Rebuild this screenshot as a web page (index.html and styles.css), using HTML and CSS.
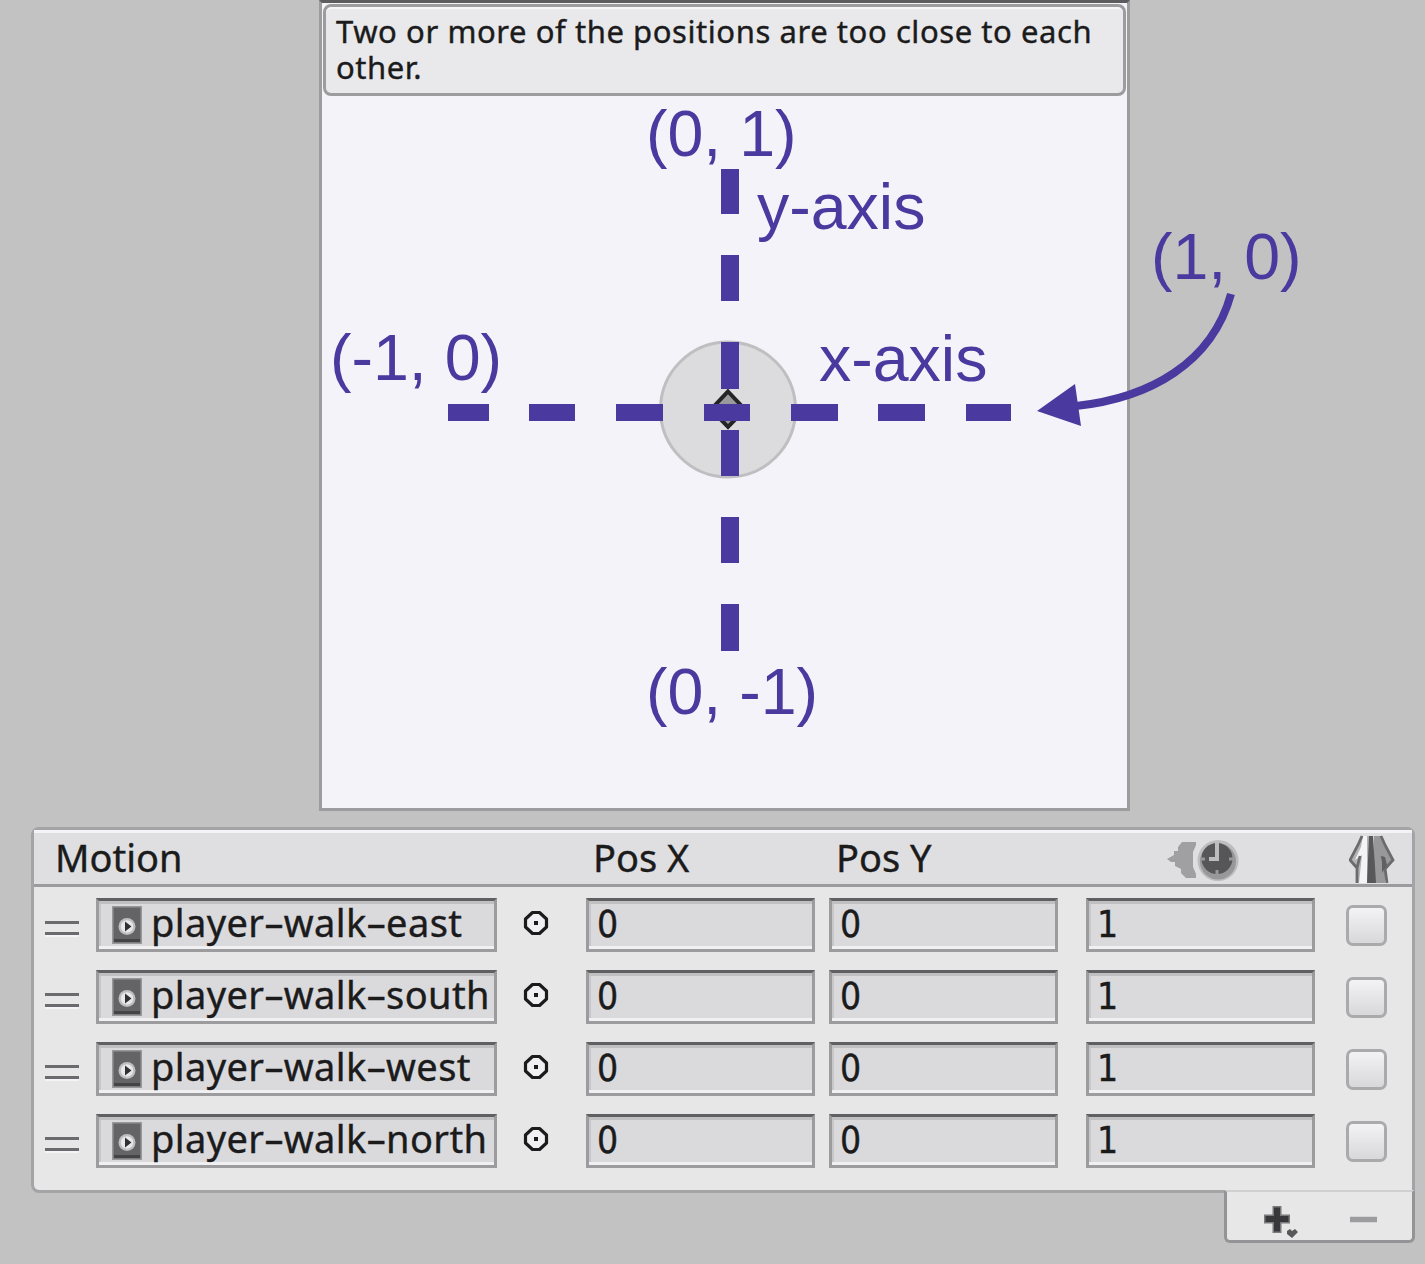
FILE: index.html
```html
<!DOCTYPE html>
<html lang="en">
<head>
<meta charset="utf-8">
<title>Blend Tree</title>
<link rel="stylesheet" href="styles.css">
</head>
<body>
<svg class="defs" width="0" height="0" aria-hidden="true">
  <defs>
    <symbol id="clip" viewBox="0 0 30 38">
      <rect width="30" height="38" fill="#98989c"/>
      <rect x="1.5" y="1.5" width="27" height="35" fill="#646467"/>
      <path d="M2 34.5H28" stroke="#444447" stroke-width="3"/>
      <circle cx="15" cy="20.5" r="8.5" fill="#bebec0"/>
      <circle cx="15" cy="20.5" r="6.2" fill="#e8e8ea"/>
      <path d="M13 15.5L19.5 20.5L13 25.5Z" fill="#303032"/>
    </symbol>
    <symbol id="picker" viewBox="0 0 26 26">
      <path d="M9.500 2.500H16.500L23.500 9V17L16.500 23.500H9.500L2.500 17V9Z" fill="#f0f0f2" stroke="#1b1b1c" stroke-width="3.200" stroke-linejoin="round"/>
      <rect x="11" y="11" width="4" height="4" fill="#1b1b1c"/>
    </symbol>
  </defs>
</svg>
<main class="inspector">
  <section class="graph">
    <p class="warning">Two or more of the positions are too close to each<br>other.</p>
  </section>

  <section class="motions">
    <div class="row head">
      <span class="title">Motion</span>
      <span>Pos X</span>
      <span>Pos Y</span>
      <svg class="speed" width="74" height="46" viewBox="0 0 74 46">
        <path d="M1 22L8 18V14H12V10L16 5H30V8L27 15V30L30 37V41H20L15 36V32L9 29V25H5Z" fill="#a0a0a3"/>
        <circle cx="52" cy="23.500" r="20.500" fill="#bdbdbf"/>
        <circle cx="52" cy="24.500" r="18" fill="#98989b"/>
        <circle cx="51" cy="21.500" r="15.500" fill="#565659"/>
        <path d="M51 6V22H43" fill="none" stroke="#bcbcbe" stroke-width="4"/>
        <path d="M34 22H39M63 22H68M51 33V38" stroke="#98989b" stroke-width="3"/>
      </svg>
      <svg class="mirror" width="46" height="49" viewBox="0 0 46 49">
        <path d="M13 1H22V48H9V35L1 25L10 8Z" fill="#b4b4b7"/>
        <path d="M14 1H18V48H10L13 20L6 25L12 12Z" fill="#f4f4f6"/>
        <path d="M25 1H32L36 10L44 25L36 35V48H24Z" fill="#98989b"/>
        <path d="M20 1H24L27 48H18Z" fill="#58585a"/>
        <path d="M13 1L9 10L1 25L8 33L11 21M8 33V48M32 1L36 10L44 25L36 34L33 21M36 33L38 48" fill="none" stroke="#6b6b6e" stroke-width="2.800"/>
        <path d="M33 22H36L38 30L33 38Z" fill="#606063"/>
      </svg>
    </div>
    <div class="rows">
      <div class="row">
        <i class="grip"></i>
        <div class="field motion"><svg width="30" height="38"><use href="#clip"/></svg><span>player–walk–east</span></div>
        <svg class="pick" width="26" height="26"><use href="#picker"/></svg>
        <div class="field num">0</div><div class="field num">0</div><div class="field num">1</div>
        <i class="check"></i>
      </div>
      <div class="row">
        <i class="grip"></i>
        <div class="field motion"><svg width="30" height="38"><use href="#clip"/></svg><span>player–walk–south</span></div>
        <svg class="pick" width="26" height="26"><use href="#picker"/></svg>
        <div class="field num">0</div><div class="field num">0</div><div class="field num">1</div>
        <i class="check"></i>
      </div>
      <div class="row">
        <i class="grip"></i>
        <div class="field motion"><svg width="30" height="38"><use href="#clip"/></svg><span>player–walk–west</span></div>
        <svg class="pick" width="26" height="26"><use href="#picker"/></svg>
        <div class="field num">0</div><div class="field num">0</div><div class="field num">1</div>
        <i class="check"></i>
      </div>
      <div class="row">
        <i class="grip"></i>
        <div class="field motion"><svg width="30" height="38"><use href="#clip"/></svg><span>player–walk–north</span></div>
        <svg class="pick" width="26" height="26"><use href="#picker"/></svg>
        <div class="field num">0</div><div class="field num">0</div><div class="field num">1</div>
        <i class="check"></i>
      </div>
    </div>
  </section>
  <footer class="actions">
    <svg width="187" height="50" viewBox="0 0 187 50">
      <path d="M37 27H63M50 14V41" stroke="#7a7a7d" stroke-width="9"/>
      <path d="M38.500 27H61.500M50 15.500V39.500" stroke="#38383a" stroke-width="6"/>
      <path d="M60 39L63 37L65 39L68 37L71 40L65 46L60 42Z" fill="#58585a"/>
      <path d="M123 27.500H150" stroke="#9c9c9f" stroke-width="5.500"/>
    </svg>
  </footer>

  <svg class="annotations" width="1425" height="830" viewBox="0 0 1425 830">
    <circle cx="728" cy="409.500" r="67.500" fill="#dcdcde" stroke="#bfbfc1" stroke-width="3"/>
    <path d="M728 391.500L745 409.500L728 427L711 409.500Z" fill="#9a9a9d" stroke="#242426" stroke-width="4"/>
    <g fill="#4a399e">
      <path d="M721 169h18v45h-18zM721 255h18v46h-18zM721 342h18v47h-18zM721 430h18v46h-18zM721 517h18v46h-18zM721 604h18v47h-18z"/>
      <path d="M448 404h41v17h-41zM529 404h46v17h-46zM616 404h47v17h-47zM704 404h46v17h-46zM791 404h47v17h-47zM878 404h47v17h-47zM966 404h45v17h-45z"/>
      <path d="M1037 411L1075 384L1081 426Z"/>
    </g>
    <path d="M1231 294C1212 363 1150 398 1076 406" fill="none" stroke="#4a399e" stroke-width="8"/>
    <g class="labels">
      <text x="646" y="156">(0, 1)</text>
      <text x="757" y="229">y-axis</text>
      <text x="1151" y="279">(1, 0)</text>
      <text x="330" y="380">(-1, 0)</text>
      <text x="819" y="381">x-axis</text>
      <text x="646" y="714">(0, -1)</text>
    </g>
  </svg>
</main>
</body>
</html>
```
FILE: styles.css
```css
* { box-sizing: border-box; }

body {
  margin: 0;
  background: #c2c2c2;
  color: #1b1b1c;
  font-family: "Noto Sans", "Open Sans", sans-serif;
  -webkit-text-stroke: 0.4px currentColor;
}

.defs { display: block; }

.inspector {
  position: relative;
  display: flex;
  flex-direction: column;
  width: 1425px;
  height: 1264px;
  overflow: hidden;
}

.graph {
  width: 811px;
  height: 811px;
  margin-left: 319px;
  padding: 1px 1px 0;
  background: #f4f3f9;
  border: 3px solid #9c9c9f;
  border-top-color: #5c5c5f;
}

.warning {
  height: 92px;
  margin: 0;
  padding: 6px 10px;
  background: #e9e9eb;
  border: 3px solid #9c9c9f;
  border-radius: 8px;
  box-shadow: inset 0 2px #f6f6f8;
  font-size: 31px;
  line-height: 36px;
  letter-spacing: 0.57px;
  white-space: nowrap;
}

.motions {
  width: 1384px;
  height: 366px;
  margin: 16px 0 0 31px;
  background: #e7e7e8;
  border: 3px solid #a4a4a7;
  border-radius: 8px 8px 0 8px;
  font-size: 38px;
}

.row {
  display: grid;
  grid-template-columns: 51px 401px 89px 243px 257px 260px 41px;
  align-items: center;
  height: 72px;
  padding-left: 11px;
}

.head {
  grid-template-columns: 538px 243px 330px 183px 46px;
  height: 57px;
  padding-left: 21px;
  background: #dfdfe1;
  border-bottom: 3px solid #9c9c9f;
  box-shadow: inset 0 3px #f4f4f6;
  line-height: 54px;
}

.speed { margin-top: 6px; }
.mirror { margin-top: 4px; }

.rows { padding-top: 2px; }

.grip {
  width: 34px;
  height: 14px;
  margin-top: 5px;
  border: solid #6b6b6e;
  border-width: 3px 0;
  box-shadow: 0 2px #f4f4f6;
}

.field {
  height: 54px;
  background: #dadadc;
  border: 3px solid #9c9c9f;
  border-top-color: #606063;
  box-shadow: inset 0 3px #c0c0c3, inset 0 -3px #f0f0f2, inset 2px 0 #c8c8ca;
  line-height: 47px;
  white-space: nowrap;
}

.motion {
  display: flex;
  align-items: center;
  gap: 9px;
  padding-left: 13px;
}

.motion span {
  margin-top: -5px;
  letter-spacing: 0.4px;
}

.pick { margin-left: 26px; margin-top: -4px; }

.num {
  width: 229px;
  padding-left: 8px;
  font-family: "DejaVu Sans Condensed", "DejaVu Sans", sans-serif;
  font-size: 37px;
}

.check {
  width: 41px;
  height: 41px;
  background: linear-gradient(#f3f3f5, #d8d8da);
  border: 3px solid #aaaaad;
  border-radius: 7px;
}

.actions {
  width: 191px;
  height: 53px;
  margin: -3px 0 0 1224px;
  background: #e7e7e8;
  border: 3px solid #949497;
  border-top: 2px solid #d0d0d2;
  border-radius: 0 0 6px 6px;
}

.annotations {
  position: absolute;
  left: 0;
  top: 0;
}

.labels {
  fill: #4a399e;
  font-family: "Liberation Sans", Arial, sans-serif;
  font-size: 64.500px;
  -webkit-text-stroke: 0.5px #4a399e;
}
```
